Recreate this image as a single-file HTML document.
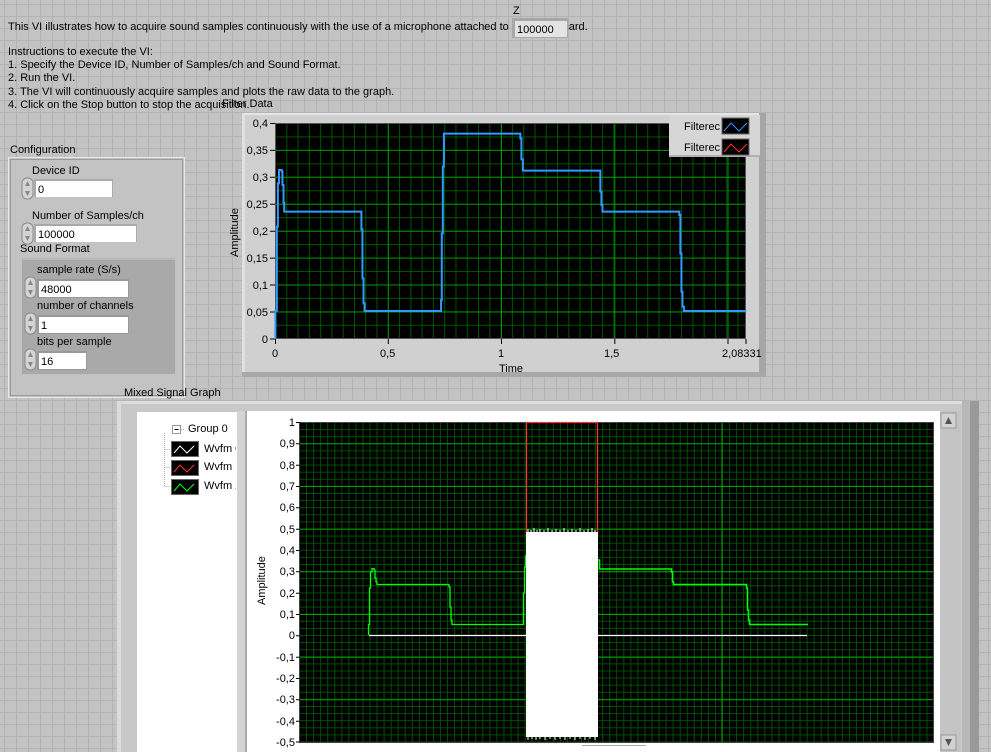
<!DOCTYPE html>
<html><head><meta charset="utf-8"><style>
html,body{margin:0;padding:0;width:991px;height:752px;overflow:hidden;background:#c3c3c3}
svg{display:block}
text{font-family:"Liberation Sans",Arial,sans-serif;font-size:11px;fill:#000}
</style></head><body>
<svg width="991" height="752" viewBox="0 0 991 752" xmlns="http://www.w3.org/2000/svg">
<defs>
<pattern id="bg" width="12" height="12" patternUnits="userSpaceOnUse" x="4" y="4">
<rect width="12" height="12" fill="#c3c3c3"/><path d="M0 0.5H12M0.5 0V12" stroke="#b3b3b3" stroke-width="1"/></pattern>
<pattern id="g1min" width="11.28" height="13.45" patternUnits="userSpaceOnUse" x="275" y="123">
<rect width="12" height="14" fill="#000"/><path d="M0 0.5H12M0.5 0V14" stroke="#005400" stroke-width="1"/></pattern>
<pattern id="g2min" width="7.05" height="7.1" patternUnits="userSpaceOnUse" x="299" y="422">
<rect width="8" height="8" fill="#000"/><path d="M0 0.5H8M0.5 0V8" stroke="#005000" stroke-width="1"/></pattern>
<g id="spin"><rect x="0" y="0" width="11" height="21" rx="5" fill="#d4d4d4" stroke="#8a8a8a"/><path d="M3 8l2.5-5 2.5 5zM3 13l2.5 5 2.5-5z" fill="#888"/></g>
</defs>
<rect width="991" height="752" fill="url(#bg)"/>

<!-- top text -->
<text x="513" y="14">Z</text>
<text x="8" y="30">This VI illustrates how to acquire sound samples continuously with the use of a microphone attached to the sound card.</text>
<rect x="512" y="18" width="56" height="20" fill="#a8a8a8"/>
<rect x="515" y="21" width="52" height="16" fill="#e4e4e4"/>
<text x="517" y="33">100000</text>
<text x="8" y="55">Instructions to execute the VI:</text>
<text x="8" y="68">1.  Specify the Device ID, Number of Samples/ch and Sound Format.</text>
<text x="8" y="81">2.  Run the VI.</text>
<text x="8" y="95">3.  The VI will continuously acquire samples and  plots the raw data to the graph.</text>
<text x="8" y="108">4.  Click on the Stop button to stop the acquisition.</text>
<text x="222" y="107">Filter Data</text>

<!-- Configuration cluster -->
<text x="10" y="153">Configuration</text>
<rect x="8.5" y="157.5" width="176" height="240" fill="#c3c3c3" stroke="#e8e8e8"/>
<rect x="10.5" y="159.5" width="172" height="236" fill="none" stroke="#9a9a9a"/>
<g>
<text x="32" y="174">Device ID</text>
<use href="#spin" x="22" y="178"/>
<rect x="34" y="179" width="79" height="18" fill="#a9a9a9"/><rect x="36" y="181" width="76" height="16" fill="#fff"/>
<text x="38" y="193">0</text>
<text x="32" y="219">Number of Samples/ch</text>
<use href="#spin" x="22" y="223"/>
<rect x="34" y="224" width="103" height="18" fill="#a9a9a9"/><rect x="36" y="226" width="100" height="16" fill="#fff"/>
<text x="38" y="238">100000</text>
<text x="20" y="252">Sound Format</text>
<rect x="22" y="258" width="153" height="116" fill="#a9a9a9"/>
<rect x="22" y="258" width="153" height="2" fill="#b9b9b9"/>
<text x="37" y="273">sample rate (S/s)</text>
<use href="#spin" x="25" y="277"/>
<rect x="37" y="279" width="92" height="19" fill="#999"/><rect x="39" y="281" width="89" height="16" fill="#fff"/>
<text x="41" y="293">48000</text>
<text x="37" y="309">number of channels</text>
<use href="#spin" x="25" y="313"/>
<rect x="37" y="315" width="92" height="19" fill="#999"/><rect x="39" y="317" width="89" height="16" fill="#fff"/>
<text x="41" y="329">1</text>
<text x="37" y="345">bits per sample</text>
<use href="#spin" x="25" y="349"/>
<rect x="37" y="351" width="50" height="19" fill="#999"/><rect x="39" y="353" width="47" height="16" fill="#fff"/>
<text x="41" y="365">16</text>
</g>

<!-- Top graph -->
<rect x="242" y="113" width="524" height="264" fill="#d0d0d0"/>
<rect x="242" y="113" width="524" height="2" fill="#e6e6e6"/>
<rect x="242" y="113" width="3" height="264" fill="#e0e0e0"/>
<rect x="759" y="113" width="7" height="264" fill="#a6a6a6"/>
<rect x="242" y="372" width="524" height="5" fill="#a8a8a8"/>
<rect x="275" y="123" width="471" height="216" fill="url(#g1min)"/>
<g stroke="#009000" stroke-width="1">
<path d="M275 123.5H746M275 150.4H746M275 177.3H746M275 204.3H746M275 231.2H746M275 258.1H746M275 285H746M275 312H746"/>
<path d="M388.3 123V339M501.5 123V339M614.8 123V339M728 123V339"/>
</g>
<rect x="275.5" y="123.5" width="470" height="215" fill="none" stroke="#555"/>
<g text-anchor="end">
<text x="268" y="127">0,4</text><text x="268" y="154">0,35</text><text x="268" y="181">0,3</text><text x="268" y="208">0,25</text><text x="268" y="235">0,2</text><text x="268" y="262">0,15</text><text x="268" y="289">0,1</text><text x="268" y="316">0,05</text><text x="268" y="343">0</text>
</g>
<path d="M270 123.5h5M270 150.4h5M270 177.3h5M270 204.3h5M270 231.2h5M270 258.1h5M270 285h5M270 312h5M270 339h5M275.5 339v5M388.3 339v5M501.5 339v5M614.8 339v5M728 339v5M746 339v5" stroke="#000"/>
<text x="272" y="357">0</text><text x="380" y="357">0,5</text><text x="498" y="357">1</text><text x="604" y="357">1,5</text><text x="722" y="357">2,08331</text>
<text x="499" y="372">Time</text>
<text transform="translate(238,257) rotate(-90)">Amplitude</text>
<g transform="translate(220,100) scale(0.3509,0.3333)">
<path fill="none" stroke="#3399ff" stroke-width="2" vector-effect="non-scaling-stroke" d="M158 717V633H162V380H165V250H168V210H176V215H178V255H181V308H183V335H403V388H406V535H409V610H412V633H630V600H632V400H635V200H638V101H856V115H859V178H863V212H1084V275H1087V315H1090V335H1309V345H1312V460H1315V575H1318V620H1322V633H1500"/>
</g>
<!-- legend top -->
<rect x="669" y="115" width="91" height="42" fill="#d6d6d6"/>
<rect x="669" y="155" width="91" height="2" fill="#b0b0b0"/>
<text x="684" y="130">Filterec</text><text x="684" y="151">Filterec</text>
<rect x="722" y="118" width="27" height="16" fill="#000" stroke="#666"/>
<rect x="722" y="139" width="27" height="16" fill="#000" stroke="#666"/>
<path d="M724 131l7-8 8 8 8-8" fill="none" stroke="#3399ff"/>
<path d="M724 152l7-8 8 8 8-8" fill="none" stroke="#ff3333"/>

<!-- Mixed signal graph -->
<text x="124" y="396">Mixed Signal Graph</text>
<rect x="117" y="401" width="862" height="351" fill="#c8c8c8"/>
<rect x="117" y="401" width="862" height="3" fill="#dedede"/>
<rect x="117" y="401" width="4" height="351" fill="#dcdcdc"/>
<rect x="970" y="401" width="9" height="351" fill="#9a9a9a"/>
<rect x="962" y="401" width="8" height="351" fill="#b8b8b8"/>
<rect x="137" y="412" width="100" height="340" fill="#fff"/>
<rect x="245" y="411" width="695" height="341" fill="#fff"/>
<rect x="245" y="411" width="2" height="341" fill="#aaa"/>
<rect x="940" y="411" width="20" height="341" fill="#c4c4c4"/>
<rect x="941" y="413" width="15" height="15" fill="#d2d2d2" stroke="#999"/>
<path d="M945 424l3.5-7 3.5 7z" fill="#555"/>
<rect x="941" y="735" width="15" height="15" fill="#d2d2d2" stroke="#999"/>
<path d="M945 739l3.5 7 3.5-7z" fill="#555"/>
<rect x="299" y="422" width="634" height="320" fill="url(#g2min)"/>
<g stroke="#00a000" stroke-width="1">
<path d="M299 443.8H933M299 486.5H933M299 529.2H933M299 571.8H933M299 614.5H933M299 657.2H933M299 699.8H933"/>
<path d="M722 422V742"/>
</g>
<rect x="299.5" y="422.5" width="634" height="320" fill="none" stroke="#444"/>
<g text-anchor="end">
<text x="295" y="426">1</text><text x="295" y="447">0,9</text><text x="295" y="469">0,8</text><text x="295" y="490">0,7</text><text x="295" y="511">0,6</text><text x="295" y="533">0,5</text><text x="295" y="554">0,4</text><text x="295" y="575">0,3</text><text x="295" y="597">0,2</text><text x="295" y="618">0,1</text><text x="295" y="639">0</text><text x="295" y="661">-0,1</text><text x="295" y="682">-0,2</text><text x="295" y="703">-0,3</text><text x="295" y="725">-0,4</text><text x="295" y="746">-0,5</text>
</g>
<path d="M296 422.5h4M296 443.8h4M296 465.2h4M296 486.5h4M296 507.8h4M296 529.2h4M296 550.5h4M296 571.8h4M296 593.2h4M296 614.5h4M296 635.8h4M296 657.2h4M296 678.5h4M296 699.8h4M296 721.2h4M296 742h4" stroke="#000"/>
<text transform="translate(265,605) rotate(-90)">Amplitude</text>
<path d="M369 635.5H807" stroke="#fff" stroke-width="1.3"/>
<path fill="none" stroke="#00ff00" stroke-width="1.3" d="M368.5 635V624.5H369.5V588H370.5V572H372V568.5H374V570H375V578H376V582H377V584.5H449V587H450V607H451V620H452V624.5H523.5V593H524.5V567H525.5V556H527"/>
<path fill="none" stroke="#00ff00" stroke-width="1.6" d="M598 560H599.5V569H671.5V572H672.5V582H673.5V584.5H746.5V588H747.5V610H748.5V620H749.5V624.5H808"/>
<path fill="none" stroke="#ff3333" stroke-width="1.2" d="M526.5 537V422.5H597.5V536"/>
<rect x="526" y="532" width="72" height="205" fill="#fff"/>
<path d="M528 532v-3M531 532v-2M534 532v-4M537 532v-2M540 532v-3M544 532v-2M548 532v-4M552 532v-2M556 532v-3M560 532v-2M564 532v-4M568 532v-2M572 532v-3M576 532v-2M580 532v-4M584 532v-2M588 532v-3M592 532v-4M595 532v-2M528 737v3M532 737v2M536 737v3M540 737v2M545 737v3M550 737v2M555 737v3M560 737v2M565 737v3M570 737v2M575 737v3M580 737v2M585 737v3M590 737v2M595 737v3" stroke="#fff"/>
<path d="M582 745.5H646" stroke="#aaa" stroke-width="1"/>
<!-- mixed legend -->
<rect x="172.5" y="425.5" width="8" height="8" fill="#fff" stroke="#999"/>
<path d="M174.5 429.5h4" stroke="#000"/>
<path d="M181 429.5h4M164.5 433v54M164.5 449.5h6M164.5 467.5h6M164.5 486.5h6" stroke="#aaa" stroke-dasharray="1 1"/>
<text x="188" y="432">Group 0</text>
<rect x="171.5" y="441.5" width="27" height="15" fill="#000" stroke="#666"/>
<rect x="171.5" y="460.5" width="27" height="15" fill="#000" stroke="#666"/>
<rect x="171.5" y="479.5" width="27" height="15" fill="#000" stroke="#666"/>
<path d="M174 453l6-7 7 7 7-7" fill="none" stroke="#fff"/>
<path d="M174 472l6-7 7 7 7-7" fill="none" stroke="#ff3333"/>
<path d="M174 491l6-7 7 7 7-7" fill="none" stroke="#00ff00"/>
<text x="204" y="452">Wvfm 0</text><text x="204" y="470">Wvfm 1</text><text x="204" y="489">Wvfm 2</text>
<rect x="236" y="440" width="8" height="60" fill="#fff"/>
<rect x="237" y="411" width="8" height="341" fill="#d4d4d4"/>
</svg>
</body></html>
